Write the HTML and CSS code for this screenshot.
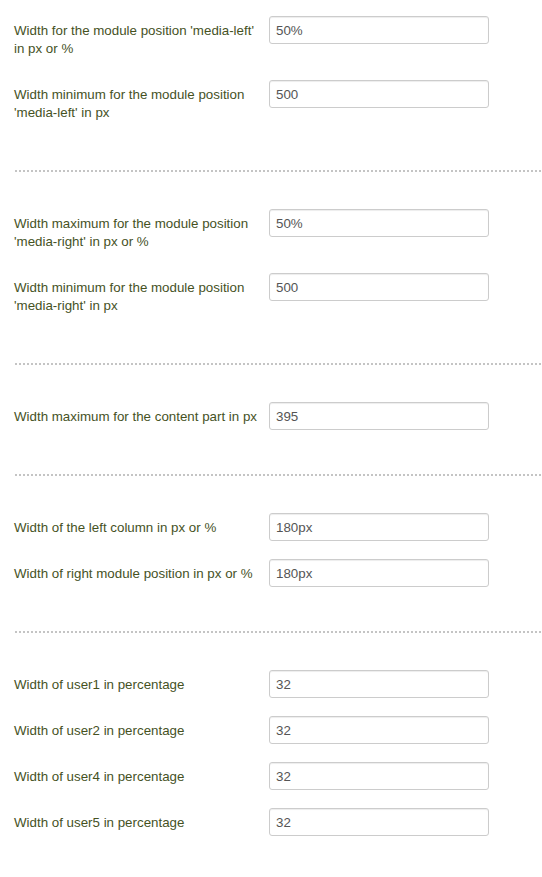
FILE: index.html
```html
<!DOCTYPE html>
<html>
<head>
<meta charset="utf-8">
<link rel="stylesheet" href="styles.css">
</head>
<body>
<div class="form">
  <div class="row"><label class="lbl">Width for the module position 'media-left' in px or %</label><input class="inp" type="text" value="50%"></div>
  <div class="row"><label class="lbl">Width minimum for the module position 'media-left' in px</label><input class="inp" type="text" value="500"></div>
  <div class="sep"></div>
  <div class="row"><label class="lbl">Width maximum for the module position 'media-right' in px or %</label><input class="inp" type="text" value="50%"></div>
  <div class="row"><label class="lbl">Width minimum for the module position 'media-right' in px</label><input class="inp" type="text" value="500"></div>
  <div class="sep"></div>
  <div class="row"><label class="lbl">Width maximum for the content part in px</label><input class="inp" type="text" value="395"></div>
  <div class="sep"></div>
  <div class="row"><label class="lbl">Width of the left column in px or %</label><input class="inp" type="text" value="180px"></div>
  <div class="row"><label class="lbl">Width of right module position in px or %</label><input class="inp" type="text" value="180px"></div>
  <div class="sep"></div>
  <div class="row"><label class="lbl">Width of user1 in percentage</label><input class="inp" type="text" value="32"></div>
  <div class="row"><label class="lbl">Width of user2 in percentage</label><input class="inp" type="text" value="32"></div>
  <div class="row"><label class="lbl">Width of user4 in percentage</label><input class="inp" type="text" value="32"></div>
  <div class="row"><label class="lbl">Width of user5 in percentage</label><input class="inp" type="text" value="32"></div>
</div>
</body>
</html>
```
FILE: styles.css
```css
html, body {
  margin: 0;
  padding: 0;
  background: #fff;
}
body {
  font-family: "Liberation Sans", Arial, sans-serif;
  font-size: 13.33px;
}
.form {
  padding: 16px 0 0 14px;
}
.row {
  display: flex;
  align-items: flex-start;
  margin-bottom: 18px;
}
.lbl {
  width: 245px;
  flex: none;
  padding: 6px 0 4px;
  line-height: 18px;
  color: #46521f;
  margin-right: 10px;
}
.inp {
  box-sizing: border-box;
  width: 220px;
  height: 28px;
  margin: 0;
  padding: 0 6px;
  border: 1px solid #cccccc;
  border-radius: 3px;
  box-shadow: inset 0 1px 1px rgba(0,0,0,0.075);
  font-family: "Liberation Sans", Arial, sans-serif;
  font-size: 13.33px;
  color: #555555;
  background: #fff;
  outline: none;
}
.sep {
  height: 2px;
  margin: 44px 0 37px 1px;
  background-image: linear-gradient(to right, #c4c4c4 2px, transparent 2px);
  background-size: 4px 2px;
  background-repeat: repeat-x;
}
```
